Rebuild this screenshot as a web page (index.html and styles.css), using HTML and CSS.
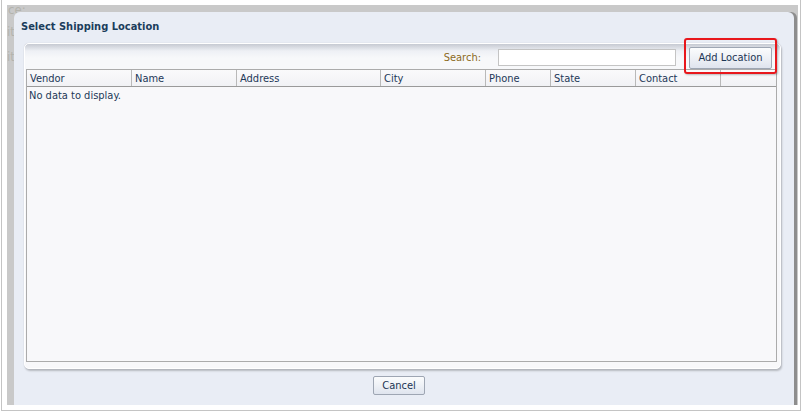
FILE: index.html
```html
<!DOCTYPE html>
<html>
<head>
<meta charset="utf-8">
<link rel="stylesheet" href="styles.css">
</head>
<body>
<div class="frame">
  <div class="backdrop">
    <span class="ghost g1">ce:</span>
    <span class="ghost g2">it</span>
    <span class="ghost g3">it</span>
    <div class="dialog">
      <div class="title">Select Shipping Location</div>
      <div class="panel">
        <div class="toolbar">
          <label class="search-label">Search:</label>
          <input class="search-input" type="text">
          <div class="add-wrap">
            <button class="btn add-btn">Add Location</button>
            <span class="highlight"></span>
          </div>
        </div>
        <div class="table">
          <div class="thead">
            <div class="th w1">Vendor</div>
            <div class="th w2">Name</div>
            <div class="th w3">Address</div>
            <div class="th w4">City</div>
            <div class="th w5">Phone</div>
            <div class="th w6">State</div>
            <div class="th w7">Contact</div>
            <div class="th w8"></div>
          </div>
          <div class="tbody">No data to display.</div>
        </div>
      </div>
      <div class="footer">
        <button class="btn cancel-btn">Cancel</button>
      </div>
    </div>
  </div>
</div>
</body>
</html>
```

FILE: styles.css
```css
* { box-sizing: border-box; }
html, body { margin: 0; padding: 0; }
body {
  width: 805px;
  height: 414px;
  background: #ffffff;
  overflow: hidden;
  font-family: "DejaVu Sans Condensed", "DejaVu Sans", sans-serif;
  font-size: 11px;
}
.frame {
  margin-left: 1px;
  width: 800px;
  height: 411px;
  border-left: 1px solid #c4c4c4;
  border-right: 1px solid #c4c4c4;
  border-bottom: 1px solid #c4c4c4;
  padding: 5px 2px 0 5px;
}
.backdrop {
  position: relative;
  height: 400px;
  background: #c9c9c9;
  padding: 7px 4px 0 7px;
}
.ghost {
  position: absolute;
  color: #b3b3ad;
  font-size: 13px;
  line-height: 13px;
}
.g1 { left: 1px; top: -2px; }
.g2 { left: 0px; top: 20px; }
.g3 { left: 0px; top: 45px; }
.dialog {
  position: relative;
  height: 393px;
  background: #e9edf5;
  border-radius: 6px 6px 0 0;
  box-shadow: 3px 0 0 #8d8d8d;
  padding: 0;
  display: flex;
  flex-direction: column;
}
.title {
  height: 31px;
  padding: 8px 0 0 7px;
  font-weight: bold;
  font-size: 11px;
  color: #1b3d5c;
}
.panel {
  margin-left: 10px;
  width: 757px;
  height: 326px;
  border-radius: 5px;
  border: 1px solid #ffffff;
  box-shadow: 1px 2px 2px rgba(0,0,0,0.22), 0 0 1px rgba(0,0,0,0.2);
  background: linear-gradient(#c6cad2 0, #eef0f5 7px, #f7f8fa 14px, #f8f8fa 100%);
  padding: 2px 3px 0 1px;
  display: flex;
  flex-direction: column;
}
.toolbar {
  height: 23px;
  display: flex;
  align-items: center;
  justify-content: flex-end;
  padding-right: 5px;
}
.search-label {
  color: #8c6a1d;
  font-size: 11px;
  margin-right: 17px;
}
.search-input {
  width: 178px;
  height: 17px;
  border: 1px solid #c4c4c4;
  background: #ffffff;
  margin: 0 13px 0 0;
  padding: 0;
}
.add-wrap {
  position: relative;
  display: flex;
}
.btn {
  font-family: "DejaVu Sans Condensed", "DejaVu Sans", sans-serif;
  font-size: 11px;
  color: #1c3554;
  border: 1px solid #9ea6b3;
  border-radius: 2px;
  background: linear-gradient(#fbfcfd 0%, #eef1f6 50%, #dfe4ee 100%);
  padding: 0;
  cursor: default;
}
.add-btn {
  width: 83px;
  height: 22px;
}
.highlight {
  position: absolute;
  left: -5px;
  top: -9px;
  width: 93px;
  height: 36px;
  border: 2px solid #e8171c;
  border-radius: 3px;
  box-shadow: 1px 1px 2px rgba(0,0,0,0.25);
  pointer-events: none;
}
.table {
  flex: 1;
  margin-bottom: 6px;
  border: 1px solid #ababab;
  background: #f8f8fa;
  display: flex;
  flex-direction: column;
}
.thead {
  display: flex;
  height: 17px;
  border-bottom: 1px solid #9a9a9a;
  background: linear-gradient(#fafafb, #f1f2f5);
}
.th {
  border-right: 1px solid #b9b9b9;
  padding: 2px 0 0 3px;
  color: #1d3858;
  font-size: 11px;
  line-height: 14px;
  white-space: nowrap;
}
.th.w8 { border-right: none; }
.w1 { width: 105px; }
.w2 { width: 105px; }
.w3 { width: 144px; }
.w4 { width: 105px; }
.w5 { width: 65px; }
.w6 { width: 85px; }
.w7 { width: 85px; }
.w8 { flex: 1; }
.tbody {
  padding: 2px 0 0 2px;
  color: #1d3858;
  font-size: 11px;
}
.footer {
  display: flex;
  padding: 7px 0 0 359px;
}
.cancel-btn {
  width: 52px;
  height: 19px;
}
```
